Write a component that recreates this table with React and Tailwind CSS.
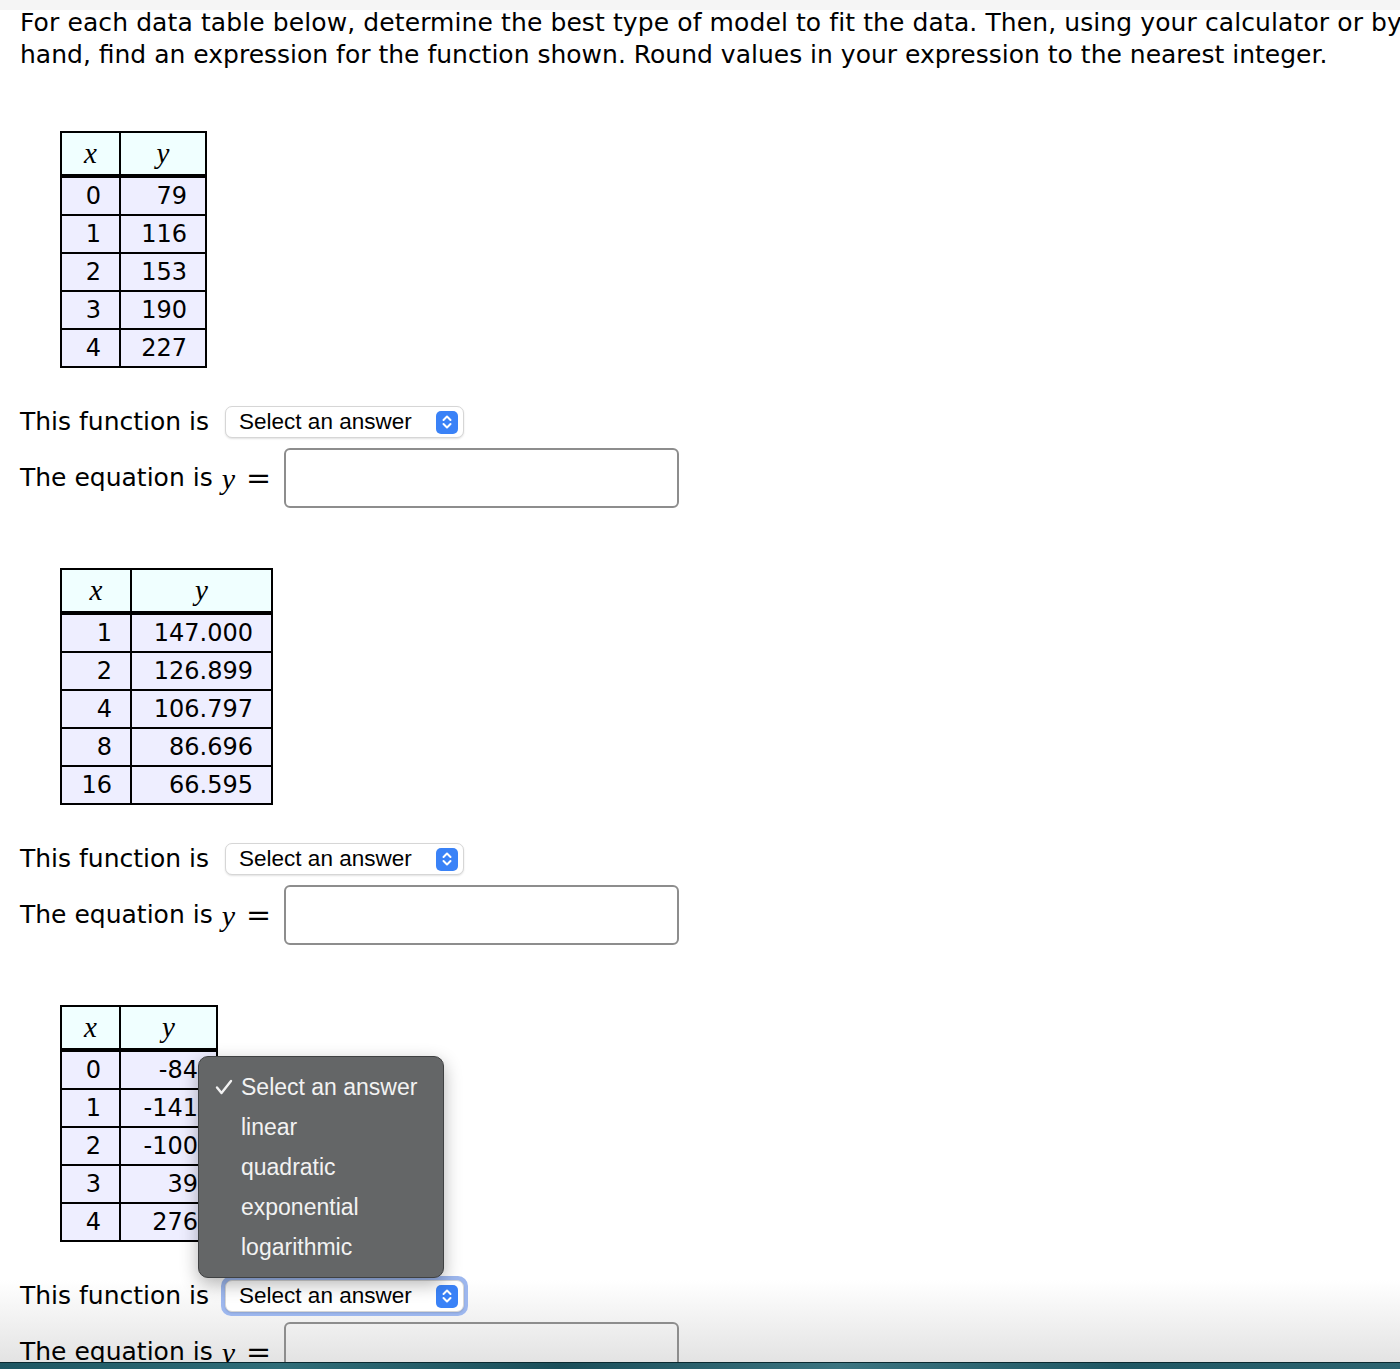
import React from 'react';

const tables = [
  { c1: 'w-[59px]', c2: 'w-[84px]', rows: [['0', '79'], ['1', '116'], ['2', '153'], ['3', '190'], ['4', '227']] },
  { c1: 'w-[70px]', c2: 'w-[139px]', rows: [['1', '147.000'], ['2', '126.899'], ['4', '106.797'], ['8', '86.696'], ['16', '66.595']] },
  { c1: 'w-[59px]', c2: 'w-[95px]', rows: [['0', '-84'], ['1', '-141'], ['2', '-100'], ['3', '39'], ['4', '276']] },
];

const options = ['Select an answer', 'linear', 'quadratic', 'exponential', 'logarithmic'];

function Chevrons() {
  return (
    <span className="flex h-[23px] w-[22px] items-center justify-center rounded-[5px] bg-[#3a82f7]">
      <svg width="12" height="16" viewBox="0 0 12 16" fill="none" stroke="white" strokeWidth="2" strokeLinecap="round" strokeLinejoin="round">
        <path d="M2.5 6 L6 2.5 L9.5 6" />
        <path d="M2.5 10 L6 13.5 L9.5 10" />
      </svg>
    </span>
  );
}

function DataTable({ table }) {
  return (
    <div className="inline-flex flex-col border-2 border-black text-[24px] leading-none">
      <div className="flex h-[45px] border-b-4 border-black bg-[#f0ffff]">
        <div className={`${table.c1} flex items-center justify-center border-r-2 border-black font-['Liberation_Serif',serif] text-[29px] italic`}>x</div>
        <div className={`${table.c2} flex items-center justify-center font-['Liberation_Serif',serif] text-[29px] italic`}>y</div>
      </div>
      {table.rows.map((r, i) => (
        <div key={i} className={`flex bg-[#eeeeff] ${i < 4 ? 'h-[38px] border-b-2 border-black' : 'h-[36px]'}`}>
          <div className={`${table.c1} flex items-center justify-end border-r-2 border-black pr-[18px]`}>{r[0]}</div>
          <div className={`${table.c2} flex items-center justify-end pr-[18px]`}>{r[1]}</div>
        </div>
      ))}
    </div>
  );
}

function SelectBox({ focused }) {
  return (
    <div className={`rounded-[10px] p-[4px] ${focused ? 'bg-[#9db7ee]' : ''}`}>
      <div className="flex h-[32px] w-[239px] items-center justify-between rounded-[7px] border border-[#d6d6d6] bg-white pl-[13px] pr-[5px] font-['Liberation_Sans',sans-serif] text-[22.5px] text-black shadow-[0_1px_2px_rgba(0,0,0,0.12)]">
        <span>Select an answer</span>
        <Chevrons />
      </div>
    </div>
  );
}

function Check() {
  return (
    <svg width="18" height="16" viewBox="0 0 18 16" fill="none" stroke="#f2f2f2" strokeWidth="2.4" strokeLinecap="round" strokeLinejoin="round">
      <path d="M2 8.5 L6.5 14 L16 2" />
    </svg>
  );
}

function Question({ table, open, last }) {
  return (
    <div className="relative">
      <div className="pl-[60px]">
        <DataTable table={table} />
      </div>
      <div className="mt-[34px] flex items-center">
        <span className="pl-[20px]">This function is</span>
        <div className="ml-[12px]">
          <SelectBox focused={open} />
        </div>
      </div>
      <div className="mt-[6px] flex items-center">
        <span className="pl-[20px]">The equation is</span>
        <span className="ml-[9px] font-['Liberation_Serif',serif] text-[30px] italic">y</span>
        <span className="ml-[11px] font-['DejaVu_Serif',serif] text-[30px] leading-none">=</span>
        <div className={`ml-[13px] h-[60px] w-[395px] rounded-[6px] border-2 border-[#8d8d8d] ${last ? '' : 'bg-white'}`} />
      </div>
      {open && (
        <div className="absolute left-[198px] top-[51px] z-10 w-[246px] rounded-[10px] border border-[#3f4142] bg-[#646667] py-[10px] font-['Liberation_Sans',sans-serif] text-[23px] text-[#f2f2f2] shadow-[0_6px_18px_rgba(0,0,0,0.3)]">
          {options.map((o, i) => (
            <div key={o} className="flex h-[40px] items-center">
              <span className="flex w-[42px] justify-start pl-[16px]">{i === 0 ? <Check /> : null}</span>
              <span>{o}</span>
            </div>
          ))}
        </div>
      )}
    </div>
  );
}

export default function App() {
  return (
    <div className="relative h-[1369px] w-[1400px] overflow-hidden bg-[linear-gradient(to_bottom,#f5f5f5_0px,#f5f5f5_10px,#ffffff_10px,#ffffff_1280px,#e3e3e3_1362px)] font-['DejaVu_Sans',sans-serif] text-[25px] text-black">
      <p className="whitespace-nowrap pl-[20px] pt-[7px] leading-[32px]">
        <span className="tracking-[0.1px]">For each data table below, determine the best type of model to fit the data. Then, using your calculator or by</span>
        <br />
        hand, find an expression for the function shown. Round values in your expression to the nearest integer.
      </p>
      <div className="mt-[60px] flex flex-col gap-[60px]">
        <Question table={tables[0]} />
        <Question table={tables[1]} />
        <Question table={tables[2]} open last />
      </div>
      <div className="absolute bottom-0 left-0 h-[7px] w-full border-t border-[#0b2a31] bg-[linear-gradient(to_right,#1d5662,#2f6d78,#1a4e59,#3b7480,#1f5763,#2c6470)]" />
    </div>
  );
}
